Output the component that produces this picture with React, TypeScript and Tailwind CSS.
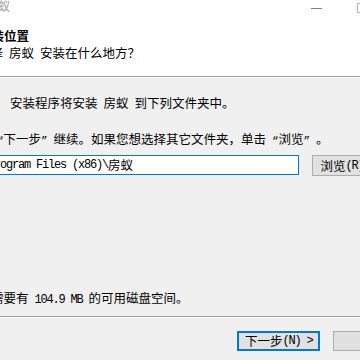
import React from "react";

function M({ children }: { children: React.ReactNode }) {
  return (
    <span className="font-['Liberation_Mono',monospace] text-[12px] leading-none tracking-[-1.2px]">
      {children}
    </span>
  );
}

// full-width curly quote, like the dialog font draws it
function Q({ open }: { open?: boolean }) {
  return (
    <span
      className={
        "inline-block w-[12.5px] font-['Liberation_Mono',monospace] text-[11px] leading-none " +
        (open ? "text-right" : "text-left")
      }
    >
      {open ? "“" : "”"}
    </span>
  );
}

export default function App() {
  return (
    <div className="relative h-[360px] w-[360px] overflow-hidden bg-[#f0f0f0] font-['Noto_Sans_CJK_SC',sans-serif] text-[12.5px] leading-4 text-black">
      {/* header */}
      <div className="h-[76px] bg-white">
        <div className="flex h-3 items-start">
          <span className="-ml-[14px] text-[12px] leading-3 text-[#a0a0a0]">房蚁</span>
          <span className="ml-auto mt-[8px] h-px w-[11px] bg-[#808080]" />
          <span className="-mr-[7px] ml-[35px] mt-[3px] h-[10px] w-[10px] shrink-0 border border-[#b0b0b0]" />
        </div>
        <div className="-ml-[46px] mt-[16px] h-4 font-bold">选择安装位置</div>
        <div className="-ml-[22px] mt-px h-4">
          选择<M> </M>房蚁<M> </M>安装在什么地方？
        </div>
      </div>
      <div className="h-px bg-[#a0a0a0]" />
      <div className="h-px bg-white" />

      {/* body */}
      <div className="-ml-[34px] w-[440px]">
        <div className="mt-[17px] h-4 pl-[44px]">
          安装程序将安装<M> </M>房蚁<M> </M>到下列文件夹中。
        </div>
        <div className="mt-[20px] h-4">
          单击<Q open />下一步<Q />继续。如果您想选择其它文件夹，单击<Q open />浏览<Q />。
        </div>
        <div className="mt-[8px] flex items-start">
          <div className="flex h-5 w-[333px] items-center border border-[#0078d7] bg-white pl-[3px]">
            <M>C:\Program Files (x86)\</M>
            <span>房蚁</span>
          </div>
          <div className="ml-[13px] flex h-[21px] w-[60px] items-center justify-center border border-[#adadad] bg-[#e1e1e1]">
            浏览<M>(R)</M>
          </div>
        </div>
        <div className="mt-[114px] h-4">
          至少需要有<M> 104.9 MB </M>的可用磁盘空间。
        </div>
        <div className="mt-[10px] h-px bg-[#a0a0a0]" />
        <div className="h-px bg-white" />
        <div className="mt-[13px] flex gap-[13px] pl-[271px]">
          <div className="flex h-5 w-[86px] items-center justify-center border-2 border-[#0078d7] bg-[#e1e1e1]">
            下一步<M>(N) &gt;</M>
          </div>
          <div className="h-5 w-[75px] border border-[#adadad] bg-[#e1e1e1]" />
        </div>
      </div>
    </div>
  );
}
